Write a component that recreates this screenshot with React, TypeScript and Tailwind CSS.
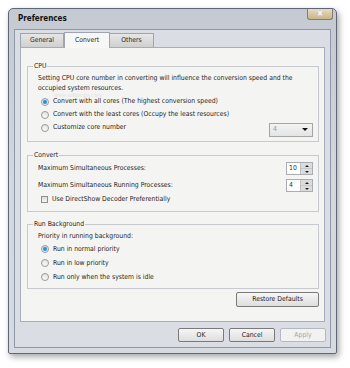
import React from "react";

const Radio = ({ checked = false }: { checked?: boolean }) => (
  <span className="w-[8px] h-[8px] rounded-full border border-[#9a9a9a] bg-gradient-to-b from-[#e4e4e4] to-[#fbfbfb] flex items-center justify-center shrink-0">
    {checked && <span className="w-[4px] h-[4px] rounded-full bg-[#2f8fe6] shadow-[0_0_1px_#7cc0f7]"></span>}
  </span>
);

const RadioRow = ({ label, checked, className = "" }: { label: string; checked?: boolean; className?: string }) => (
  <div className={"flex items-center gap-[4px] pl-[13px] " + className}>
    <Radio checked={checked} />
    <span>{label}</span>
  </div>
);

const Spinner = ({ value }: { value: string }) => (
  <div className="w-[27px] h-[13px] flex border border-[#a9acb2] bg-white">
    <div className="flex-1 pl-[2px] leading-[11px] text-[#333]">{value}</div>
    <div className="w-[12px] flex flex-col bg-[#dcdcdc] border-l border-[#c0c0c0]">
      <div className="flex-1 flex items-center justify-center border-b border-[#c8c8c8]">
        <span className="w-0 h-0 border-l-[2px] border-r-[2px] border-b-[2px] border-l-transparent border-r-transparent border-b-[#222]"></span>
      </div>
      <div className="flex-1 flex items-center justify-center">
        <span className="w-0 h-0 border-l-[2px] border-r-[2px] border-t-[2px] border-l-transparent border-r-transparent border-t-[#222]"></span>
      </div>
    </div>
  </div>
);

const Button = ({ label, disabled = false, className = "" }: { label: string; disabled?: boolean; className?: string }) => (
  <div
    className={
      "h-[14px] flex items-center justify-center rounded-[2px] border " +
      (disabled
        ? "border-[#b5b9bd] bg-[#f2f2f2] text-[#a3a3a3] "
        : "border-[#7a7a7a] bg-gradient-to-b from-[#f6f6f6] to-[#dedede] text-[#1c1c1c] ") +
      className
    }
  >
    {label}
  </div>
);

export default function App() {
  return (
    <div className="w-[350px] h-[368px] bg-white pt-[8px] pl-[8px] font-['DejaVu_Sans_Condensed','Liberation_Sans',sans-serif] text-[6.8px] text-[#1e1e1e] leading-none">
      <div className="w-[329px] h-[346px] flex flex-col border border-[#5e6778] rounded-t-[5px] rounded-b-[2px] bg-gradient-to-b from-[#c4c9d2] via-[#d3d7de] to-[#d6dae1] px-[5px] pb-[5px] shadow-[2px_3px_6px_rgba(0,0,0,0.35)]">
        {/* title bar */}
        <div className="h-[20px] flex items-start justify-between">
          <div className="h-full flex items-center pl-[4px] font-bold text-[8px] text-[#111]">Preferences</div>
          <div className="w-[26px] h-[11px] mr-[-2px] flex items-center justify-center rounded-b-[3px] border border-t-0 border-[#8a7f66] bg-gradient-to-b from-[#e6dcc2] to-[#c8b68c] text-white text-[8px] font-bold">
            ×
          </div>
        </div>

        {/* client area */}
        <div className="flex-1 flex flex-col border border-[#8f98a8] bg-[#dadde4] pt-[1px] pl-[5px] pr-[4px] pb-[5px]">
          {/* tabs */}
          <div className="flex items-end h-[16px]">
            <div className="w-[44px] h-[14px] flex items-center justify-center border border-b-0 border-[#9ea5b1] bg-gradient-to-b from-[#e6e6e6] to-[#d0d0d0]">
              General
            </div>
            <div className="w-[46px] h-[16px] flex items-center justify-center border border-b-0 border-[#9ea5b1] bg-[#f7f7f5] mb-[-1px] relative z-10">
              Convert
            </div>
            <div className="w-[44px] h-[14px] flex items-center justify-center border border-b-0 border-l-0 border-[#9ea5b1] bg-gradient-to-b from-[#e6e6e6] to-[#d0d0d0]">
              Others
            </div>
          </div>

          {/* panel */}
          <div className="h-[275px] mr-[1px] border border-[#a6adba] bg-[#f4f4f2] pt-[18px] pl-[6px] pr-[5px] flex flex-col">
            {/* CPU */}
            <div className="relative h-[76px] border border-[#c6c9ce] pt-[6px] pr-[5px]">
              <span className="absolute top-[-5px] left-[5px] px-[1px] bg-[#f4f4f2] leading-[9px]">CPU</span>
              <span className="absolute top-[26px] left-[26px] text-[5.5px] text-[#e4e4e2] leading-[5px]">www.softpedia.com</span>
              <div className="pl-[10px] leading-[10px] relative">
                Setting CPU core number in converting will influence the conversion speed and the
                <br />
                occupied system resources.
              </div>
              <div className="mt-[2px] flex flex-col">
                <RadioRow checked label="Convert with all cores (The highest conversion speed)" className="h-[13px]" />
                <RadioRow label="Convert with the least cores (Occupy the least resources)" className="h-[13px]" />
                <div className="h-[13px] flex items-center justify-between">
                  <RadioRow label="Customize core number" />
                  <div className="w-[44px] h-[14px] mt-[4px] flex items-center justify-between border border-[#a5a5a5] bg-gradient-to-b from-[#f3f3f3] to-[#e4e4e4] pl-[3px] pr-[4px] text-[#9a9a9a]">
                    <span>4</span>
                    <span className="w-0 h-0 border-l-[3px] border-r-[3px] border-t-[3px] border-l-transparent border-r-transparent border-t-[#111]"></span>
                  </div>
                </div>
              </div>
            </div>

            {/* Convert */}
            <div className="relative h-[57px] mt-[13px] border border-[#c6c9ce] pt-[6px] pl-[10px] pr-[5px]">
              <span className="absolute top-[-5px] left-[5px] px-[1px] bg-[#f4f4f2] leading-[9px]">Convert</span>
              <div className="h-[13px] flex items-center justify-between">
                <span>Maximum Simultaneous Processes:</span>
                <Spinner value="10" />
              </div>
              <div className="h-[13px] mt-[4px] flex items-center justify-between">
                <span>Maximum Simultaneous Running Processes:</span>
                <Spinner value="4" />
              </div>
              <div className="h-[11px] mt-[2px] flex items-center gap-[4px] pl-[3px]">
                <span className="w-[7px] h-[7px] border border-[#8f8f8f] bg-gradient-to-b from-[#dcdcdc] to-[#f6f6f6]"></span>
                <span>Use DirectShow Decoder Preferentially</span>
              </div>
            </div>

            {/* Run Background */}
            <div className="relative h-[65px] mt-[12px] border border-[#c6c9ce] pt-[6px]">
              <span className="absolute top-[-5px] left-[5px] px-[1px] bg-[#f4f4f2] leading-[9px]">Run Background</span>
              <div className="h-[11px] flex items-center pl-[10px]">Priority in running background:</div>
              <RadioRow checked label="Run in normal priority" className="h-[14px]" />
              <RadioRow label="Run in low priority" className="h-[14px]" />
              <RadioRow label="Run only when the system is idle" className="h-[14px]" />
            </div>

            <div className="flex justify-end mt-[3px]">
              <Button label="Restore Defaults" className="w-[83px] h-[15px]" />
            </div>
          </div>

          {/* dialog buttons */}
          <div className="flex justify-end gap-[5px] mt-[6px]">
            <Button label="OK" className="w-[46px]" />
            <Button label="Cancel" className="w-[46px]" />
            <Button label="Apply" disabled className="w-[46px]" />
          </div>
        </div>
      </div>
    </div>
  );
}
